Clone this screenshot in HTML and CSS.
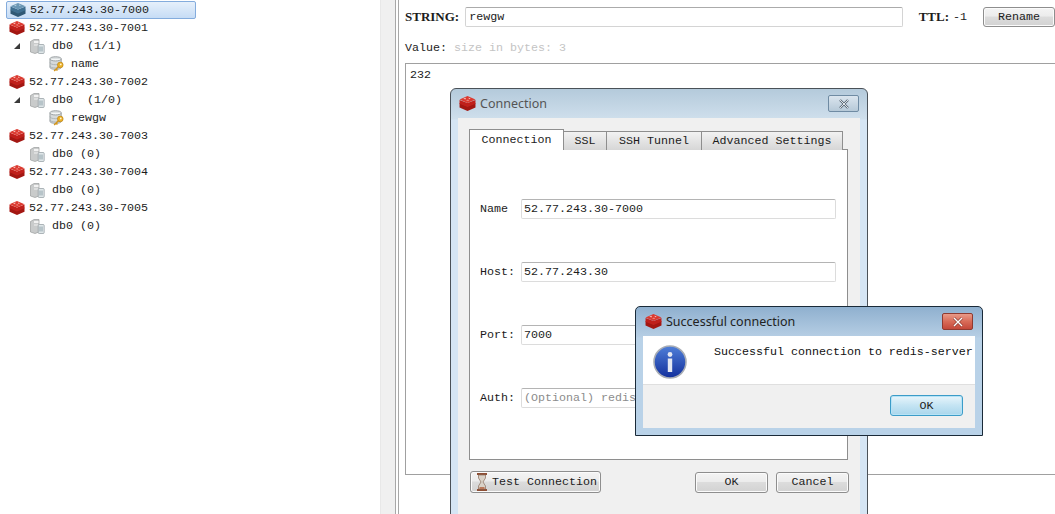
FILE: index.html
```html
<!DOCTYPE html>
<html lang="en">
<head>
<meta charset="utf-8">
<title>Redis Desktop Manager</title>
<link rel="stylesheet" href="styles.css">
</head>
<body>
<svg class="defs" width="0" height="0" aria-hidden="true">
  <defs>
    <symbol id="redis" viewBox="0 0 16 16">
      <path d="M8 10.5 15.5 7.6v4.1L8 15 .5 11.7V7.6z" fill="#a31712"/>
      <path d="M8 7.5 15.5 4.6v3.6L8 11.4.5 8.2V4.6z" fill="#c0201b"/>
      <path d="M8 1 15.5 4.2 8 7.6.5 4.2z" fill="#dc3a30"/>
      <path d="M4 3.2 6.6 2.6 6 4.2zM9 2.5l2 .7-1.6.8zM6.5 5l2-.5 1 1z" fill="#f6c6c0"/>
    </symbol>
    <symbol id="redis-blue" viewBox="0 0 16 16">
      <path d="M8 10.5 15.5 7.6v4.1L8 15 .5 11.7V7.6z" fill="#2f5874"/>
      <path d="M8 7.5 15.5 4.6v3.6L8 11.4.5 8.2V4.6z" fill="#3f6f90"/>
      <path d="M8 1 15.5 4.2 8 7.6.5 4.2z" fill="#6b97b4"/>
      <path d="M4 3.2 6.6 2.6 6 4.2zM9 2.5l2 .7-1.6.8z" fill="#b9d0de"/>
    </symbol>
    <symbol id="db" viewBox="0 0 16 16">
      <path d="M1.5 3.5 5 1.5h5v12.5L6 15.5 1.5 14z" fill="#c9cbcb" stroke="#9a9c9c" stroke-width=".7"/>
      <path d="M5 3h4.5v2H5zM5 6.5h4.5v1H5z" fill="#f2f2f2"/>
      <rect x="9.2" y="6.5" width="6" height="9" rx="1" fill="#dfe6e8" stroke="#8f9a9e" stroke-width=".7"/>
      <path d="M11 8.5v5M13 8.5v5" stroke="#8fa2aa" stroke-width="1"/>
    </symbol>
    <symbol id="keydb" viewBox="0 0 17 17">
      <path d="M1 3c0-3 12-3 12 0v9c0 3-12 3-12 0z" fill="#d6dadb" stroke="#878d90" stroke-width=".8"/>
      <path d="M1 3c0 3 12 3 12 0" fill="#f4f6f6" stroke="#878d90" stroke-width=".8"/>
      <path d="M1 7c0 3 12 3 12 0M1 10.5c0 3 12 3 12 0" fill="none" stroke="#a3a9ac" stroke-width=".8"/>
      <circle cx="12" cy="9.5" r="3" fill="#eeb328" stroke="#b57f14" stroke-width=".7"/>
      <path d="M10 11.5 5.5 16M7.5 14l1.5 1.5" stroke="#d3961c" stroke-width="1.6" fill="none"/>
      <circle cx="12.5" cy="9" r=".9" fill="#fff6d8"/>
    </symbol>
    <linearGradient id="infoFill" x1="0" y1="0" x2="0" y2="1">
      <stop offset="0" stop-color="#4f7fd8"/>
      <stop offset="1" stop-color="#122f9c"/>
    </linearGradient>
  </defs>
</svg>

<div class="app">
  <aside class="tree">
    <div class="row server selected"><svg class="ico"><use href="#redis-blue"/></svg><span>52.77.243.30-7000</span></div>
    <div class="row server"><svg class="ico"><use href="#redis"/></svg><span>52.77.243.30-7001</span></div>
    <div class="row database"><span class="arrow"></span><svg class="ico"><use href="#db"/></svg><span class="pre">db0  (1/1)</span></div>
    <div class="row key"><svg class="ico"><use href="#keydb"/></svg><span>name</span></div>
    <div class="row server"><svg class="ico"><use href="#redis"/></svg><span>52.77.243.30-7002</span></div>
    <div class="row database"><span class="arrow"></span><svg class="ico"><use href="#db"/></svg><span class="pre">db0  (1/0)</span></div>
    <div class="row key"><svg class="ico"><use href="#keydb"/></svg><span>rewgw</span></div>
    <div class="row server"><svg class="ico"><use href="#redis"/></svg><span>52.77.243.30-7003</span></div>
    <div class="row database"><svg class="ico"><use href="#db"/></svg><span>db0 (0)</span></div>
    <div class="row server"><svg class="ico"><use href="#redis"/></svg><span>52.77.243.30-7004</span></div>
    <div class="row database"><svg class="ico"><use href="#db"/></svg><span>db0 (0)</span></div>
    <div class="row server"><svg class="ico"><use href="#redis"/></svg><span>52.77.243.30-7005</span></div>
    <div class="row database"><svg class="ico"><use href="#db"/></svg><span>db0 (0)</span></div>
  </aside>
  <div class="splitter"></div>
  <main class="pane">
    <div class="keybar">
      <b class="lbl">STRING:</b>
      <div class="keyinput">rewgw</div>
      <b class="lbl ttl">TTL:</b><span class="ttlval">-1</span>
      <button class="btn rename">Rename</button>
    </div>
    <div class="valuebar">Value: <span class="muted">size in bytes: 3</span></div>
    <div class="valuebox">232</div>
  </main>
</div>

<section class="win conn">
  <header class="titlebar">
    <svg class="ticon"><use href="#redis"/></svg><span class="ttext">Connection</span>
    <span class="close plain"><svg width="12" height="10" viewBox="0 0 12 10"><path d="M2 1l8 8M10 1 2 9" stroke="#5e6b78" stroke-width="2.4"/><path d="M2 1l8 8M10 1 2 9" stroke="#eef2f5" stroke-width=".9"/></svg></span>
  </header>
  <div class="client">
    <div class="tabs">
      <span class="tab active">Connection</span>
      <span class="tab t-ssl">SSL</span>
      <span class="tab t-ssh">SSH Tunnel</span>
      <span class="tab t-adv">Advanced Settings</span>
    </div>
    <div class="tabpane">
      <div class="field"><label>Name</label><div class="input">52.77.243.30-7000</div></div>
      <div class="field"><label>Host:</label><div class="input">52.77.243.30</div></div>
      <div class="field"><label>Port:</label><div class="input">7000</div></div>
      <div class="field"><label>Auth:</label><div class="input ph">(Optional) redis-server authentication password</div></div>
    </div>
    <div class="actions">
      <button class="btn test">
        <svg width="12" height="20" viewBox="0 0 12 20"><path d="M1 1h10v2H1zM1 17h10v2H1z" fill="#8e4f35"/><path d="M2.5 3h7v3L7 10l2.5 4v3h-7v-3L5 10 2.5 6z" fill="#d9d2c8" stroke="#8a6d5c" stroke-width=".7"/><path d="M3.5 15h5v2h-5z" fill="#b9785a"/></svg>
        <span>Test Connection</span>
      </button>
      <span class="grow"></span>
      <button class="btn act">OK</button>
      <button class="btn act">Cancel</button>
    </div>
  </div>
</section>

<section class="win ok-win">
  <header class="titlebar small">
    <svg class="ticon"><use href="#redis"/></svg><span class="ttext dark">Successful connection</span>
    <span class="close red"><svg width="12" height="10" viewBox="0 0 12 10"><path d="M2 1l8 8M10 1 2 9" stroke="#8a3a30" stroke-width="2.6"/><path d="M2 1l8 8M10 1 2 9" stroke="#fff" stroke-width="1.4"/></svg></span>
  </header>
  <div class="msgclient">
    <div class="msg">
      <svg class="info" width="34" height="34" viewBox="0 0 34 34">
        <circle cx="17" cy="17" r="16" fill="url(#infoFill)" stroke="#a8adb5" stroke-width="1.6"/>
        <circle cx="17" cy="9.5" r="2.4" fill="#e4e8f2"/>
        <path d="M14.8 13.5h4.4V27h-4.4z" fill="#e4e8f2"/>
      </svg>
      <p>Successful connection to redis-server</p>
    </div>
    <div class="msgfoot"><button class="btn focus">OK</button></div>
  </div>
</section>
</body>
</html>
```
FILE: styles.css
```css
* { box-sizing: border-box; }
html, body { margin: 0; height: 514px; overflow: hidden; background: #fff; }
body { position: relative; font: 11.67px/14px "Liberation Mono", monospace; color: #1c1c1c; }
.defs { position: absolute; }
.pre { white-space: pre; }

.app { display: flex; width: 1055px; height: 514px; }

.tree { width: 380px; flex: none; padding-top: 1px; }
.row { display: flex; align-items: center; height: 18px; }
.ico { width: 16px; height: 16px; flex: none; }
.server { padding-left: 9px; gap: 4px; }
.selected {
  margin-left: 6px; padding-left: 3px; width: 190px; height: 18px;
  border: 1px solid #84acdd; border-radius: 2px;
  background: linear-gradient(#e6f0fb, #c6dcf5);
}
.database { padding-left: 29px; gap: 7px; position: relative; }
.key { padding-left: 49px; gap: 6px; }
.arrow {
  position: absolute; left: 14px; top: 6px; width: 0; height: 0;
  border-left: 6px solid transparent; border-bottom: 6px solid #3a3a3a;
}

.splitter {
  width: 19px; flex: none; background: #f0f0f0;
  border-left: 1px solid #e8e8e8; border-right: 1px solid #a8a8a8;
  box-shadow: inset -2px 0 0 #fff, inset -3px 0 0 #a8a8a8;
}

.pane { flex: 1; min-width: 0; display: flex; flex-direction: column; padding: 7px 0 39px 6px; overflow: hidden; }
.keybar { display: flex; align-items: center; height: 20px; flex: none; }
.lbl { font-family: "Liberation Serif", serif; font-size: 13px; letter-spacing: 0; }
.keyinput {
  width: 457px; height: 20px; margin-left: 6px; padding: 2px 3px;
  border: 1px solid #d4d4d4; border-top-color: #ababab; border-radius: 2px; background: #fff;
}
.ttl { margin-left: 16px; }
.ttlval { margin-left: 4px; }
.rename { margin-left: 16px; width: 72px; height: 20px; flex: none; }
.valuebar { margin-top: 14px; height: 14px; flex: none; }
.muted { color: #c4c4c4; }
.valuebox {
  flex: 1; margin-top: 8px; padding: 4px 4px; margin-right: -2px;
  border: 1px solid #a0a0a0; border-right: 0; color: #222;
}

.btn {
  font: inherit; color: #1c1c1c; padding: 0;
  border: 1px solid #8e8e8e; border-radius: 3px;
  background: linear-gradient(#f4f4f4 0, #ececec 45%, #dcdcdc 50%, #d2d2d2 100%);
  box-shadow: inset 0 0 0 1px #fbfbfb;
}

.win { position: absolute; border: 1px solid #4a5158; border-radius: 6px 6px 0 0; overflow: hidden; }
.conn {
  left: 450px; top: 88px; width: 418px; height: 432px;
  background: linear-gradient(#b4cadb 0, #cfdfec 30px, #d5e5f4 31px);
  padding: 0 7px;
}
.titlebar { display: flex; align-items: center; height: 29px; padding-left: 1px; }
.ticon { width: 17px; height: 17px; flex: none; }
.ttext { font: 12.5px "Noto Sans", "Open Sans", sans-serif; color: #555; margin-left: 4px; }
.ttext.dark { color: #222; }
.close {
  margin-left: auto; width: 31px; height: 17px; display: flex; align-items: center; justify-content: center;
  border-radius: 2px;
}
.plain { border: 1px solid #6f8ba3; background: linear-gradient(#dbe5ee, #b6c9d8); margin-right: 1px; }
.red { border: 1px solid #8f3a30; background: linear-gradient(#e99a88 0, #d86b58 50%, #c4483a 100%); margin-right: 2px; }

.client { background: #f0f0f0; height: 400px; padding: 11px 12px 0 11px; }
.tabs { display: flex; height: 21px; align-items: flex-end; position: relative; z-index: 1; }
.tab {
  height: 19px; border: 1px solid #8e8e8e; border-left: 0; border-bottom: 0; text-align: center; line-height: 19px;
  background: linear-gradient(#f2f2f2, #d6d6d6);
}
.tab.active { width: 95px; height: 21px; background: #fff; border-left: 1px solid #8e8e8e; line-height: 20px; }
.t-ssl { width: 43px; }
.t-ssh { width: 95px; }
.t-adv { width: 141px; }
.tabpane {
  height: 311px; margin-top: -1px; padding: 49px 10px 0 10px; background: #fff;
  border: 1px solid #8e8e8e; display: flex; flex-direction: column; gap: 43px;
}
.field { display: flex; align-items: center; height: 20px; }
.field label { width: 41px; flex: none; }
.input {
  width: 315px; height: 20px; padding: 2px; white-space: nowrap; overflow: hidden;
  border: 1px solid #dcdcdc; border-top-color: #b4b4b4; border-radius: 2px; background: #fff;
}
.ph { color: #8c8c8c; }
.actions { display: flex; align-items: center; margin-top: 11px; height: 22px; padding-left: 1px; gap: 8px; margin-right: -1px; }
.grow { flex: 1; }
.act { width: 73px; height: 21px; }
.test { width: 131px; height: 22px; display: flex; align-items: center; gap: 4px; padding-left: 5px; }

.ok-win {
  left: 635px; top: 306px; width: 348px; height: 130px; padding: 0 7px 7px;
  border-color: #1a2a38; border-radius: 5px 5px 0 0;
  background: linear-gradient(#8fb0cf 0, #b6cee4 30px, #b9d2e8 31px);
}
.small { padding-left: 2px; }
.msgclient { background: #f0f0f0; height: 92px; }
.msg { display: flex; background: #fff; height: 49px; border-bottom: 1px solid #dfdfdf; padding: 9px 0 0 10px; }
.info { flex: none; }
.msg p { margin: 0 0 0 27px; white-space: pre; color: #111; }
.msgfoot { display: flex; justify-content: flex-end; padding: 10px 12px 0 0; }
.focus {
  width: 73px; height: 21px; border: 1px solid #3c9cc8;
  background: linear-gradient(#e8f5fb, #c4e4f3 50%, #a9d6ec);
  box-shadow: inset 0 0 0 1px #b6e3f6;
}
```
